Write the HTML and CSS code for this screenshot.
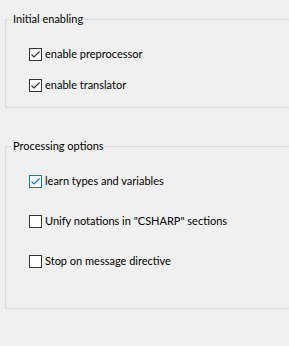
FILE: index.html
```html
<!DOCTYPE html>
<html lang="en">
<head>
  <meta charset="UTF-8" />
  <title>Options</title>
  <link rel="stylesheet" href="styles.css">
</head>
<body>
  <fieldset class="group group-init">
    <legend>Initial enabling</legend>
    <label class="opt">
      <span class="box checked">
        <svg viewBox="0 0 11 11" width="11" height="11"><path d="M1.5 5.5 L4 8 L9.5 2.5" /></svg>
      </span>
      enable preprocessor
    </label>
    <label class="opt">
      <span class="box checked">
        <svg viewBox="0 0 11 11" width="11" height="11"><path d="M1.5 5.5 L4 8 L9.5 2.5" /></svg>
      </span>
      enable translator
    </label>
  </fieldset>

  <fieldset class="group group-proc">
    <legend>Processing options</legend>
    <label class="opt">
      <span class="box checked focus">
        <svg viewBox="0 0 11 11" width="11" height="11"><path d="M1.5 5.5 L4 8 L9.5 2.5" /></svg>
      </span>
      learn types and variables
    </label>
    <label class="opt">
      <span class="box"></span>
      Unify notations in "CSHARP" sections
    </label>
    <label class="opt">
      <span class="box"></span>
      Stop on message directive
    </label>
  </fieldset>
</body>
</html>
```

FILE: styles.css
```css
body {
  margin: 0;
  padding: 11px 0 0 5px;
  background: #f0f0f0;
  color: #000;
  font-family: Lato, "Open Sans", sans-serif;
  font-size: 11px;
}
.group {
  margin: 0;
  border: 1px solid #dcdcdc;
  border-right: none;
  padding: 17px 0 12px 0;
  display: flex;
  flex-direction: column;
  gap: 11px;
}
.group legend {
  margin-left: 6px;
  padding: 0 1px;
  line-height: 16px;
  height: 16px;
}
.group-proc {
  margin-top: 30px;
  padding-bottom: 37px;
  gap: 20px;
}
.opt {
  display: flex;
  align-items: center;
  height: 20px;
  gap: 3px;
  line-height: 20px;
  margin-left: 23px;
}
.box {
  width: 11px;
  height: 11px;
  border: 1px solid #333;
  background: #fff;
  display: flex;
  align-items: center;
  justify-content: center;
  flex: none;
}
.box svg path {
  fill: none;
  stroke: #333;
  stroke-width: 1.2;
}
.box.focus {
  border-color: #0078d7;
}
.box.focus svg path {
  stroke: #0078d7;
}
```
